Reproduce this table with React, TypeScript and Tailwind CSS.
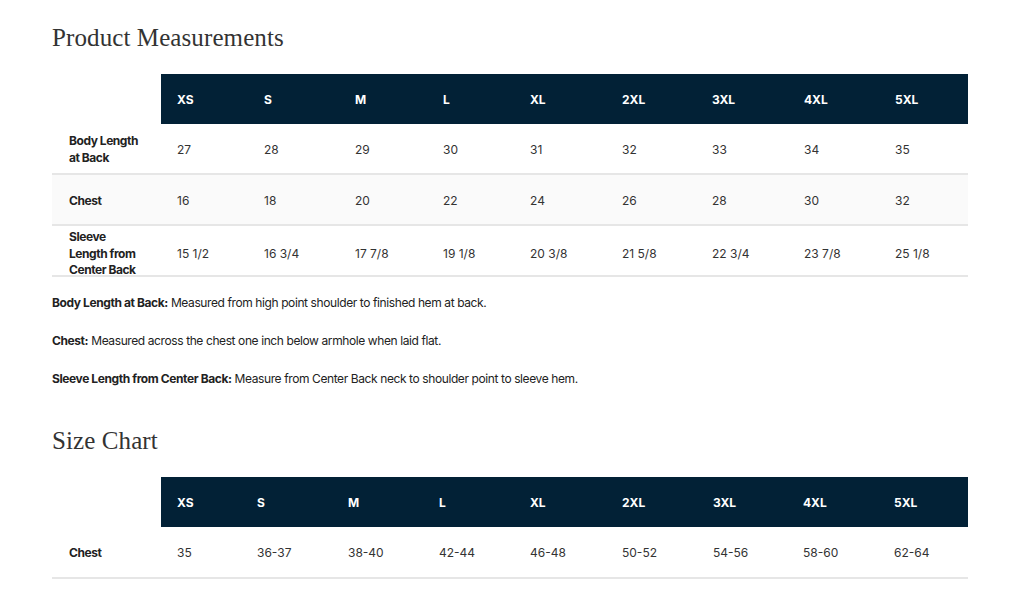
import React from "react";

// Size guide page: product measurements + size chart tables

const sizes = ["XS", "S", "M", "L", "XL", "2XL", "3XL", "4XL", "5XL"];

const measurements = [
  { label: ["Body Length", "at Back"], values: ["27", "28", "29", "30", "31", "32", "33", "34", "35"], shaded: false },
  { label: ["Chest"], values: ["16", "18", "20", "22", "24", "26", "28", "30", "32"], shaded: true },
  {
    label: ["Sleeve", "Length from", "Center Back"],
    values: ["15 1/2", "16 3/4", "17 7/8", "19 1/8", "20 3/8", "21 5/8", "22 3/4", "23 7/8", "25 1/8"],
    shaded: false,
  },
];

const notes = [
  { term: "Body Length at Back:", text: "Measured from high point shoulder to finished hem at back." },
  { term: "Chest:", text: "Measured across the chest one inch below armhole when laid flat." },
  { term: "Sleeve Length from Center Back:", text: "Measure from Center Back neck to shoulder point to sleeve hem." },
];

const chart = ["35", "36-37", "38-40", "42-44", "46-48", "50-52", "54-56", "58-60", "62-64"];

function Heading({ children }: { children: React.ReactNode }) {
  return (
    <h2 className="text-[25px] leading-[34px] text-[#333] font-['Liberation_Serif',serif] tracking-[0.1px]">
      {children}
    </h2>
  );
}

function HeaderRow({ cols }: { cols: string }) {
  return (
    <div className={`grid ${cols}`}>
      <div />
      {sizes.map((s) => (
        <div key={s} className="h-[50px] bg-[#022136] flex items-center pl-4 pt-[2px] text-white font-bold text-[12px]">
          {s}
        </div>
      ))}
    </div>
  );
}

export default function App() {
  const cols1 = "grid-cols-[109px_87px_91px_88px_87px_92px_90px_92px_91px_89px]";
  const cols2 = "grid-cols-[109px_80px_91px_91px_91px_92px_91px_90px_91px_90px]";

  return (
    <div className="min-h-screen bg-white text-[#222] font-['Inter','Liberation_Sans',sans-serif] text-[12px]">
      <div className="w-[916px] ml-[52px] pt-[21px]">
        <Heading>Product Measurements</Heading>

        <div className="mt-[19px]">
          <HeaderRow cols={cols1} />
          {measurements.map((row) => (
            <div
              key={row.label.join(" ")}
              className={`grid ${cols1} h-[51px] border-b-2 border-[#e6e6e6] ${row.shaded ? "bg-[#fafafa]" : "bg-white"}`}
            >
              <div className="flex flex-col justify-center pl-[17px] pt-[3px] font-bold leading-[16.7px] tracking-[-0.45px] text-[#222] whitespace-nowrap">
                {row.label.map((line) => (
                  <span key={line}>{line}</span>
                ))}
              </div>
              {row.values.map((v, i) => (
                <div key={i} className="flex items-center pl-4 pt-[2px] text-[#333]">
                  {v}
                </div>
              ))}
            </div>
          ))}
        </div>

        <div className="mt-[17px] flex flex-col gap-[20px] tracking-[-0.4px]">
          {notes.map((n) => (
            <p key={n.term} className="leading-[18px] text-[#222]">
              <span className="font-bold">{n.term}</span> {n.text}
            </p>
          ))}
        </div>

        <div className="mt-[36px]">
          <Heading>Size Chart</Heading>
        </div>

        <div className="mt-[19px]">
          <HeaderRow cols={cols2} />
          <div className={`grid ${cols2} h-[52px] border-b-2 border-[#e6e6e6]`}>
            <div className="flex items-center pl-[17px] pt-[2px] font-bold tracking-[-0.45px] text-[#222]">Chest</div>
            {chart.map((v, i) => (
              <div key={i} className="flex items-center pl-4 pt-[2px] text-[#333]">
                {v}
              </div>
            ))}
          </div>
        </div>
      </div>
    </div>
  );
}
